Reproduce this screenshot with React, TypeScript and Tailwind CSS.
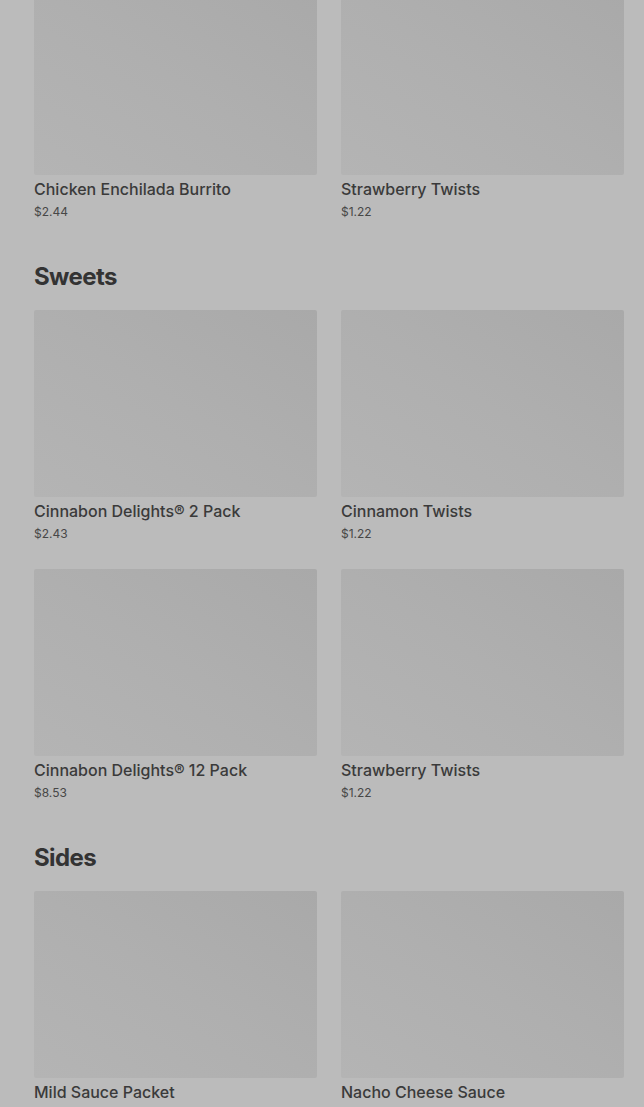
const sections: { title?: string; items: { name: string; price: string }[] }[] = [
  {
    items: [
      { name: "Chicken Enchilada Burrito", price: "$2.44" },
      { name: "Strawberry Twists", price: "$1.22" },
    ],
  },
  {
    title: "Sweets",
    items: [
      { name: "Cinnabon Delights® 2 Pack", price: "$2.43" },
      { name: "Cinnamon Twists", price: "$1.22" },
      { name: "Cinnabon Delights® 12 Pack", price: "$8.53" },
      { name: "Strawberry Twists", price: "$1.22" },
    ],
  },
  {
    title: "Sides",
    items: [
      { name: "Mild Sauce Packet", price: "$0.00" },
      { name: "Nacho Cheese Sauce", price: "$1.09" },
    ],
  },
];

function ItemCard({ name, price }: { name: string; price: string }) {
  return (
    <div className="flex flex-col">
      <div className="h-[187px] rounded-[2px] bg-gradient-to-tr from-[#b4b4b4] via-[#afafaf] to-[#a9a9a9]" />
      <div className="mt-1 text-[16px] leading-5 font-medium text-[#3a3a3a]">{name}</div>
      <div className="mt-[5px] text-[12px] leading-4 text-[#474747]">{price}</div>
    </div>
  );
}

export default function App() {
  return (
    <div
      className="min-h-screen bg-[#bbbbbb] pl-[34px] pr-[20px] overflow-hidden"
      style={{ fontFamily: "Inter, 'Liberation Sans', sans-serif" }}
    >
      <div className="-mt-[12px] flex flex-col gap-[41px]">
        {sections.map((s, i) => (
          <section key={i}>
            {s.title && (
              <h2 className="mb-[17px] text-[24px] leading-8 font-bold text-[#333333] tracking-tight">
                {s.title}
              </h2>
            )}
            <div className="grid grid-cols-2 gap-x-6 gap-y-[27px]">
              {s.items.map((it, j) => (
                <ItemCard key={j} name={it.name} price={it.price} />
              ))}
            </div>
          </section>
        ))}
      </div>
    </div>
  );
}
